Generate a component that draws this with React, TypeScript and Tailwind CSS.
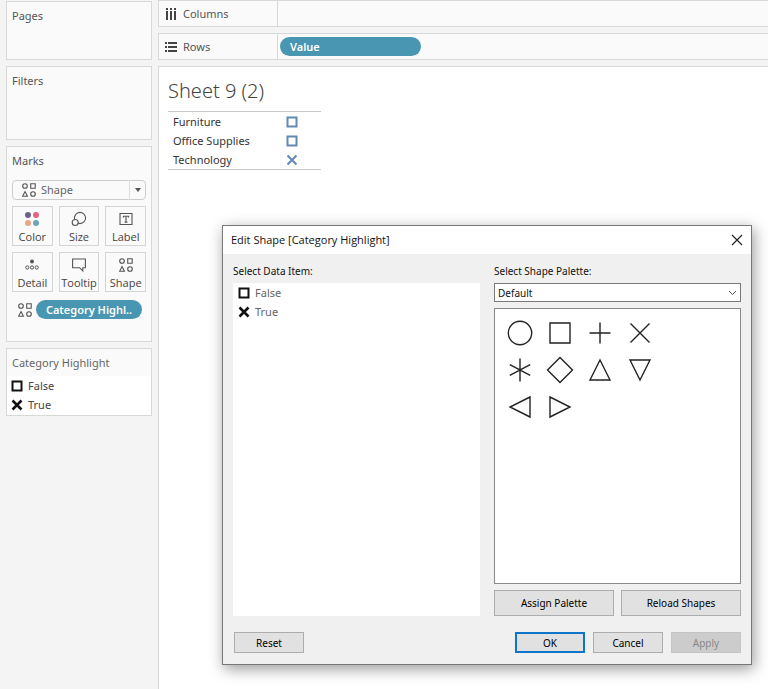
import type { ReactNode } from "react";

const cardClass = "border border-[#d8d8d8] bg-[#fafafa]";

function SquareMark({ className = "" }: { className?: string }) {
  return (
    <svg viewBox="0 0 12 12" className={`size-3 shrink-0 ${className}`} fill="none" stroke="currentColor" strokeWidth="2">
      <path d="M1.500 1.500h9v9h-9z" />
    </svg>
  );
}

function CrossMark({ className = "", weight = 2.6 }: { className?: string; weight?: number }) {
  return (
    <svg viewBox="0 0 12 12" className={`size-3 shrink-0 ${className}`} fill="none" stroke="currentColor" strokeWidth={weight}>
      <path d="M1.500 1.500l9 9M10.500 1.500l-9 9" />
    </svg>
  );
}

function ShapesIcon() {
  return (
    <svg viewBox="0 0 14 14" className="size-3.5 shrink-0 text-[#555]" fill="none" stroke="currentColor" strokeWidth="1.1">
      <circle cx="3" cy="3" r="2.3" />
      <path d="M8.700 .8h4.500v4.500H8.700zM3 8.600l2.400 4.600H.6z" />
      <circle cx="11" cy="11" r="2.3" />
    </svg>
  );
}

function ColorIcon() {
  return (
    <svg viewBox="0 0 16 16" className="size-4">
      <circle cx="4" cy="4" r="3" fill="#6b6291" />
      <circle cx="12" cy="4" r="3" fill="#e3657f" />
      <circle cx="4" cy="12" r="3" fill="#eba583" />
      <circle cx="12" cy="12" r="3" fill="#6aa5b5" />
    </svg>
  );
}

function SizeIcon() {
  return (
    <svg viewBox="0 0 16 16" className="size-4" fill="#fafafa" stroke="#555" strokeWidth="1.1">
      <circle cx="9" cy="7" r="5.6" />
      <circle cx="4.2" cy="11.5" r="3" />
    </svg>
  );
}

function LabelIcon() {
  return (
    <svg viewBox="0 0 16 16" className="size-4" fill="none" stroke="#555" strokeWidth="1.1">
      <path d="M2 2.500h12v11H2zM5.400 6.600V5.200h5.200v1.400M8 5.200v5.900M6.600 11.100h2.800" />
    </svg>
  );
}

function DetailIcon() {
  return (
    <svg viewBox="0 0 16 16" className="size-4" fill="none" stroke="#555">
      <circle cx="8" cy="4.500" r="1.9" fill="#555" stroke="none" />
      <circle cx="3.3" cy="10.500" r="1.6" />
      <circle cx="8" cy="10.500" r="1.6" />
      <circle cx="12.7" cy="10.500" r="1.6" />
    </svg>
  );
}

function TooltipIcon() {
  return (
    <svg viewBox="0 0 16 16" className="size-4" fill="none" stroke="#555" strokeWidth="1.1">
      <path d="M1.600 2h12.800v8.700h-2.600v3.200L8.600 10.700h-7z" />
    </svg>
  );
}

const markButtons: { label: string; icon: ReactNode }[] = [
  { label: "Color", icon: <ColorIcon /> },
  { label: "Size", icon: <SizeIcon /> },
  { label: "Label", icon: <LabelIcon /> },
  { label: "Detail", icon: <DetailIcon /> },
  { label: "Tooltip", icon: <TooltipIcon /> },
  { label: "Shape", icon: <ShapesIcon /> },
];

const paletteShapes: { name: string; drawing: ReactNode }[] = [
  { name: "Circle", drawing: <circle cx="14" cy="14" r="11.7" /> },
  { name: "Square", drawing: <path d="M4 4h20v20H4z" /> },
  { name: "Plus", drawing: <path d="M14 3.500v21M3.500 14h21" /> },
  { name: "Cross", drawing: <path d="M4.500 4.500l19 19M23.500 4.500l-19 19" /> },
  { name: "Asterisk", drawing: <path d="M14 2.500v23M3.800 8.700l20.400 10.600M24.200 8.700L3.800 19.300" /> },
  { name: "Diamond", drawing: <path d="M14 1.500L26.500 14 14 26.500 1.500 14z" /> },
  { name: "Triangle up", drawing: <path d="M14 4l10 20H4z" /> },
  { name: "Triangle down", drawing: <path d="M4 4h20L14 24z" /> },
  { name: "Triangle left", drawing: <path d="M24 4v20L4 14z" /> },
  { name: "Triangle right", drawing: <path d="M4 4v20l20-10z" /> },
];

const sheetRows = [
  { category: "Furniture", match: false },
  { category: "Office Supplies", match: false },
  { category: "Technology", match: true },
];

function Sidebar() {
  return (
    <aside className="flex w-[158px] shrink-0 flex-col gap-1.5 bg-[#f4f4f4] px-1.5 pt-px text-[11px] leading-4 text-[#555]">
      <section className={`h-[59px] px-[5px] py-1.5 ${cardClass}`}>
        <h2>Pages</h2>
      </section>
      <section className={`h-[74px] px-[5px] py-1.5 ${cardClass}`}>
        <h2>Filters</h2>
      </section>
      <section className={`h-[196px] px-[5px] py-1.5 ${cardClass}`}>
        <h2>Marks</h2>
        <div className="relative mt-[11px] flex h-5 items-center text-[#666]">
          <select
            aria-label="Mark type"
            className="h-5 w-full appearance-none rounded-sm border border-[#ccc] bg-[#fafafa] pl-7 text-[11px] leading-4"
          >
            <option>Shape</option>
          </select>
          <span className="pointer-events-none absolute left-2.5">
            <ShapesIcon />
          </span>
          <span className="pointer-events-none absolute right-0 flex h-5 w-[17px] items-center justify-center border-l border-[#ddd]">
            <svg viewBox="0 0 6 4" className="h-1 w-1.5">
              <path d="M0 0h6L3 4z" fill="#555" />
            </svg>
          </span>
        </div>
        <div className="mt-1.5 grid grid-cols-3 gap-1.5 font-['Open_Sans',sans-serif] text-[#444]">
          {markButtons.map((b) => (
            <button key={b.label} className="flex h-10 flex-col items-center justify-between border border-[#d4d4d4] bg-[#fafafa] pt-1 text-[11px] leading-4">
              <span className="flex size-4 items-center justify-center">{b.icon}</span>
              {b.label}
            </button>
          ))}
        </div>
        <div className="mt-2 flex items-center gap-1 pr-1 pl-1.5">
          <ShapesIcon />
          <button className="h-[19px] min-w-0 grow rounded-full bg-[#4996b2] text-[11px] leading-4 font-semibold whitespace-nowrap text-white">
            Category Highl..
          </button>
        </div>
      </section>
      <section className={cardClass}>
        <h2 className="px-[5px] pt-1.5 pb-[5px] text-[#666]">Category Highlight</h2>
        <ul className="bg-white pb-px pl-1 text-[#444]">
          <li className="flex h-[19px] items-center gap-[5px]">
            <SquareMark className="text-[#111]" />
            False
          </li>
          <li className="flex h-[19px] items-center gap-[5px]">
            <CrossMark className="text-[#111]" />
            True
          </li>
        </ul>
      </section>
    </aside>
  );
}

function Shelf({ icon, label, children }: { icon: ReactNode; label: string; children?: ReactNode }) {
  return (
    <div className="flex h-[27px] items-center border-y border-l border-[#d8d8d8] bg-[#fafafa] text-[11px] leading-4 text-[#555]">
      <div className="flex h-full w-[119px] items-center gap-[5px] border-r border-[#d8d8d8] pl-[5px]">
        {icon}
        {label}
      </div>
      {children}
    </div>
  );
}

function Sheet() {
  return (
    <section className="grow border-t border-l border-[#d8d8d8] bg-white px-[9px] pt-3">
      <h1 className="text-xl leading-6 font-light text-[#444]">Sheet 9 (2)</h1>
      <table className="mt-2 w-[153px] border-y border-[#c8c8c8] text-[11px] leading-[19px] text-[#333]">
        <tbody>
          {sheetRows.map((row) => (
            <tr key={row.category}>
              <th scope="row" className="pl-[5px] text-left font-normal">{row.category}</th>
              <td className="w-[35px]">
                {row.match ? <CrossMark weight={2} className="text-[#6488b4]" /> : <SquareMark className="text-[#6488b4]" />}
              </td>
            </tr>
          ))}
        </tbody>
      </table>
    </section>
  );
}

const dialogButton = "border border-[#adadad] bg-[#e1e1e1] text-black";

function EditShapeDialog() {
  return (
    <div
      role="dialog"
      aria-labelledby="dialog-title"
      className="absolute top-[225px] left-[222px] w-[530px] border border-[#777] bg-[#f0f0f0] text-[10px] leading-4 text-[#111] shadow-[2px_4px_14px_rgba(0,0,0,0.4)]"
    >
      <header className="flex h-7 items-center justify-between bg-white px-2">
        <h2 id="dialog-title" className="font-['Open_Sans',sans-serif] text-[11px]">Edit Shape [Category Highlight]</h2>
        <button aria-label="Close">
          <svg viewBox="0 0 12 12" className="size-3" fill="none" stroke="#222" strokeWidth="1.2">
            <path d="M1 1l10 10M11 1L1 11" />
          </svg>
        </button>
      </header>
      <div className="grid grid-cols-2 gap-x-3.5 px-2.5 pt-[9px]">
        <div className="flex flex-col">
          <h3 id="items-label">Select Data Item:</h3>
          <ul aria-labelledby="items-label" className="mt-1 grow bg-white pl-[5px] text-[11px] text-[#666]">
            <li className="flex h-[19px] items-center gap-[5px]">
              <SquareMark className="text-[#111]" />
              False
            </li>
            <li className="flex h-[19px] items-center gap-[5px]">
              <CrossMark className="text-[#111]" />
              True
            </li>
          </ul>
        </div>
        <div>
          <label htmlFor="palette" className="block">Select Shape Palette:</label>
          <div className="relative mt-1">
            <select id="palette" className="block h-[19px] w-full appearance-none border border-[#7a7a7a] bg-white pl-[3px] text-[10px] leading-4">
              <option>Default</option>
            </select>
            <svg viewBox="0 0 9 6" className="pointer-events-none absolute top-[7px] right-1 h-1.5 w-[9px]" fill="none" stroke="#555">
              <path d="M1 1l3.500 3.500L8 1" />
            </svg>
          </div>
          <div className="mt-1.5 grid h-[276px] grid-cols-[repeat(auto-fill,40px)] content-start border border-[#8a8a8a] bg-white py-[5px] pr-[70px] pl-[5px]">
            {paletteShapes.map((s) => (
              <button key={s.name} aria-label={s.name} className="flex h-[37px] items-center justify-center">
                <svg viewBox="0 0 28 28" className="size-7" fill="none" stroke="#222" strokeWidth="1.4">
                  {s.drawing}
                </svg>
              </button>
            ))}
          </div>
          <div className="mt-1.5 grid grid-cols-2 gap-[7px]">
            <button className={`h-[26px] ${dialogButton}`}>Assign Palette</button>
            <button className={`h-[26px] ${dialogButton}`}>Reload Shapes</button>
          </div>
        </div>
      </div>
      <footer className="flex gap-2 pt-4 pr-2.5 pb-[11px] pl-[11px]">
        <button className={`mr-auto h-[21px] w-[70px] ${dialogButton}`}>Reset</button>
        <button className="h-[21px] w-[70px] border-2 border-[#0f75c8] bg-[#e1e1e1] leading-4 text-black">OK</button>
        <button className={`h-[21px] w-[70px] ${dialogButton}`}>Cancel</button>
        <button disabled className="h-[21px] w-[70px] border border-[#c4c4c4] bg-[#cccccc] text-[#888]">
          Apply
        </button>
      </footer>
    </div>
  );
}

export default function App() {
  return (
    <div className="relative flex min-h-screen bg-[#f4f4f4] font-['Noto_Sans',sans-serif]">
      <Sidebar />
      <main className="flex min-w-0 grow flex-col gap-1.5">
        <Shelf
          label="Columns"
          icon={
            <svg viewBox="0 0 14 14" className="size-3.5" fill="#444">
              <path d="M2 1h2v2H2zM6 1h2v2H6zM10 1h2v2h-2zM2 4h2v9H2zM6 4h2v9H6zM10 4h2v9h-2z" />
            </svg>
          }
        />
        <Shelf
          label="Rows"
          icon={
            <svg viewBox="0 0 14 14" className="size-3.5" fill="#444">
              <path d="M1 2h2v2H1zM1 6h2v2H1zM1 10h2v2H1zM4 2h9v2H4zM4 6h9v2H4zM4 10h9v2H4z" />
            </svg>
          }
        >
          <button className="ml-0.5 h-[19px] w-[141px] rounded-full bg-[#4996b2] pl-2.5 text-left font-semibold text-white">Value</button>
        </Shelf>
        <Sheet />
      </main>
      <EditShapeDialog />
    </div>
  );
}
